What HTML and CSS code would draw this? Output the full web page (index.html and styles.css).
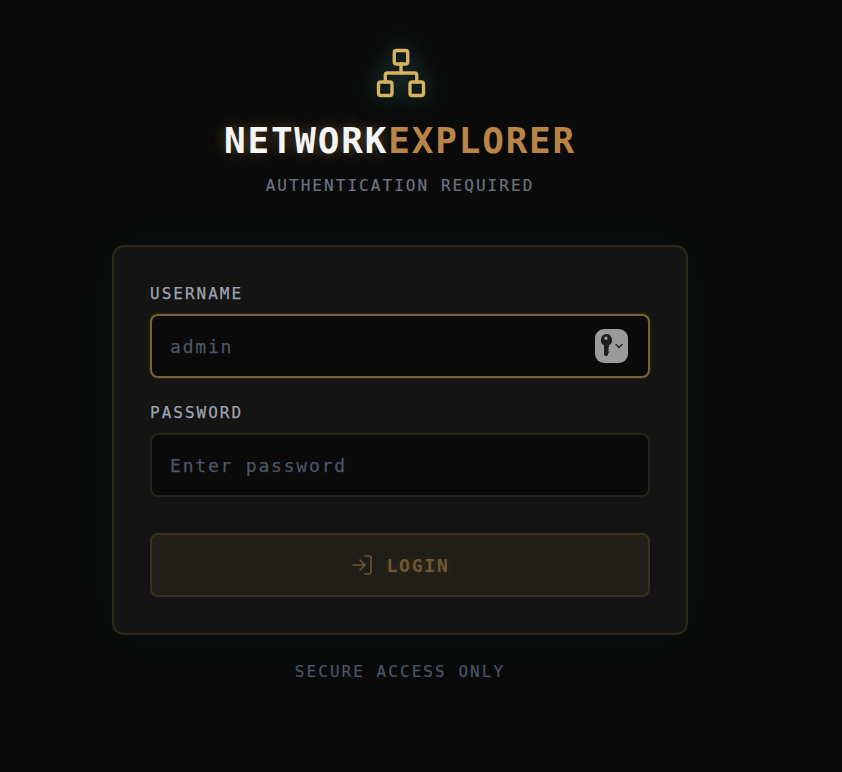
FILE: index.html
```html
<!DOCTYPE html>
<html lang="en">
<head>
<meta charset="utf-8">
<title>Network Explorer</title>
<link rel="stylesheet" href="styles.css">
</head>
<body>
<main class="page">
  <header class="brand">
    <svg class="logo" viewBox="0 0 24 24" fill="none" stroke="currentColor" stroke-width="1.5" stroke-linecap="round" stroke-linejoin="round">
      <rect x="9" y="2" width="6" height="6" rx="1"/>
      <rect x="2" y="16" width="6" height="6" rx="1"/>
      <rect x="16" y="16" width="6" height="6" rx="1"/>
      <path d="M5 16v-3a1 1 0 0 1 1-1h12a1 1 0 0 1 1 1v3"/>
      <path d="M12 12V8"/>
    </svg>
    <h1 class="title"><span class="title-main">NETWORK</span><span class="title-accent">EXPLORER</span></h1>
    <p class="subtitle">AUTHENTICATION REQUIRED</p>
  </header>
  <form class="card">
    <div class="field">
      <label class="label" for="user">USERNAME</label>
      <div class="input-wrap">
        <input class="input input-focus" id="user" type="text" placeholder="admin">
        <span class="key-badge">
          <svg class="key-icon" viewBox="0 0 33 34">
            <path class="key-shape" fill-rule="evenodd" d="M11 5a6 6 0 0 1 3 11.2V18l-1 1 1.3 1.3L13 21.6l1.3 1.3L13 24.2V26l-2 1.6-2-1.8V16.2A6 6 0 0 1 11 5zm0 2.6a1.7 1.7 0 1 0 0 3.4 1.7 1.7 0 0 0 0-3.4z"/>
            <path class="key-chevron" d="M21 15.5l3 3 3-3"/>
          </svg>
        </span>
      </div>
    </div>
    <div class="field">
      <label class="label" for="pass">PASSWORD</label>
      <input class="input" id="pass" type="password" placeholder="Enter password">
    </div>
    <button class="login" type="button" disabled>
      <svg class="login-icon" viewBox="0 0 24 24" fill="none" stroke="currentColor" stroke-width="1.5" stroke-linecap="round" stroke-linejoin="round">
        <path d="M15 3h4a2 2 0 0 1 2 2v14a2 2 0 0 1-2 2h-4"/>
        <path d="M10 17l5-5-5-5"/>
        <path d="M15 12H3"/>
      </svg>
      <span class="login-text">LOGIN</span>
    </button>
  </form>
  <p class="footnote">SECURE ACCESS ONLY</p>
</main>
</body>
</html>
```
FILE: styles.css
```css
* { box-sizing: border-box; }
html, body { margin: 0; height: 100%; }
body {
  background: #0a0a0a;
  color: #f3f4f6;
  font-family: "DejaVu Sans Mono", "Liberation Mono", monospace;
  overflow: hidden;
}
.page {
  display: flex;
  flex-direction: column;
  align-items: center;
  padding: 46px 0 0;
  width: 800px;
}
.brand {
  display: flex;
  flex-direction: column;
  align-items: center;
}
.logo {
  display: block;
  width: 54px;
  height: 54px;
  margin-left: 2px;
  color: #d9b25f;
  filter: drop-shadow(0 0 12px rgba(64, 190, 170, 0.5));
}
.title {
  margin: 19px 0 0;
  font-size: 36px;
  line-height: 44px;
  font-weight: 700;
  letter-spacing: 1.8px;
  white-space: nowrap;
}
.title-main {
  color: #f3f4f6;
  text-shadow: 0 0 14px rgba(212, 165, 90, 0.4);
}
.title-accent { color: #b98547; }
.subtitle {
  margin: 11px 0 0;
  font-size: 16px;
  line-height: 24px;
  letter-spacing: 2.05px;
  color: #6b7280;
  -webkit-text-stroke: 0.2px currentColor;
}
.card {
  margin-top: 47px;
  width: 576px;
  padding: 35px 36px 36px;
  background: #141414;
  border: 2px solid #2b2719;
  border-radius: 12px;
  box-shadow: 0 0 60px rgba(60, 140, 130, 0.05);
  display: flex;
  flex-direction: column;
}
.field { margin-bottom: 23px; }
.label {
  display: block;
  margin-bottom: 8px;
  font-size: 16px;
  line-height: 24px;
  letter-spacing: 2px;
  color: #9ca3af;
  -webkit-text-stroke: 0.25px currentColor;
}
.input-wrap { position: relative; }
.input {
  display: block;
  width: 100%;
  height: 64px;
  padding: 0 18px;
  background: #0a0a0a;
  border: 2px solid #26231a;
  border-radius: 8px;
  font: inherit;
  font-size: 18px;
  letter-spacing: 1.8px;
  color: #e5e7eb;
  outline: none;
}
.input::placeholder {
  color: #4b5563;
  opacity: 1;
  -webkit-text-stroke: 0.25px #4b5563;
}
.input-focus {
  border-color: #766237;
  box-shadow: 0 0 3px rgba(118, 98, 55, 0.5);
}
.key-badge {
  position: absolute;
  top: 15px;
  right: 22px;
  width: 33px;
  height: 34px;
  border-radius: 9px;
  background: #9a9a9a;
}
.key-icon { display: block; width: 33px; height: 34px; }
.key-shape { fill: #1e1e1e; }
.key-chevron { fill: none; stroke: #2a2a2a; stroke-width: 1.6; stroke-linecap: round; stroke-linejoin: round; }
.login {
  margin-top: 13px;
  width: 100%;
  height: 64px;
  display: flex;
  align-items: center;
  justify-content: center;
  gap: 12px;
  background: #1f1e18;
  border: 2px solid #3a3120;
  border-radius: 8px;
  color: #6e5832;
  font: inherit;
  font-size: 18px;
  font-weight: 700;
  letter-spacing: 1.8px;
}
.login-icon { display: block; width: 24px; height: 24px; }
.login-text { text-shadow: 0 0 10px rgba(185, 133, 71, 0.2); }
.footnote {
  margin: 25px 0 0;
  font-size: 16px;
  line-height: 24px;
  letter-spacing: 2.05px;
  color: #4b5563;
  -webkit-text-stroke: 0.2px currentColor;
}
```
